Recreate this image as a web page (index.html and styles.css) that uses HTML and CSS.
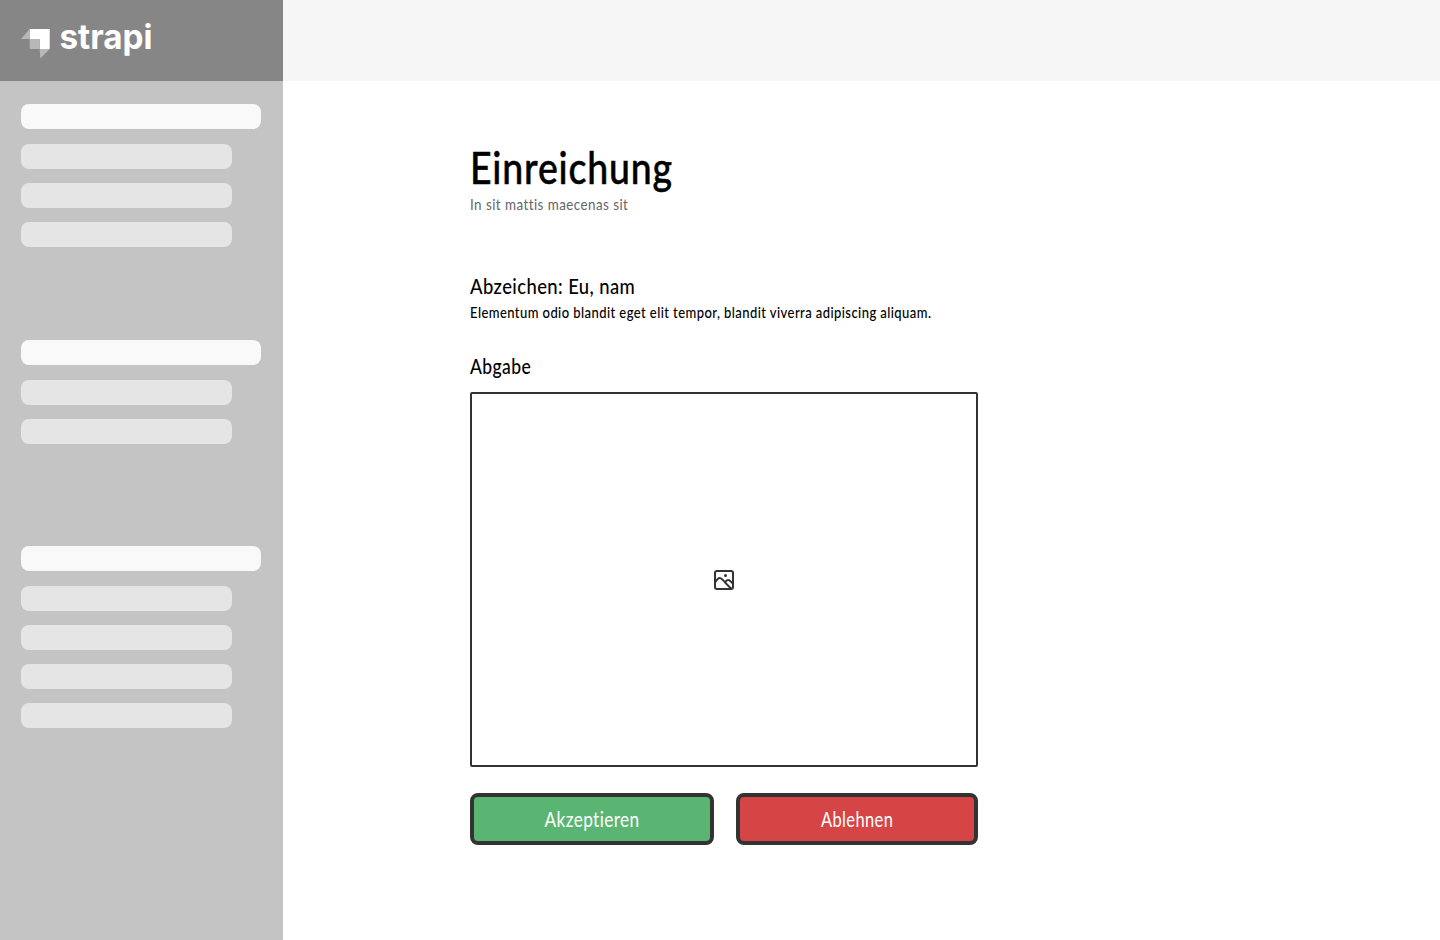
FILE: index.html
```html
<!DOCTYPE html>
<html lang="de">
<head>
<meta charset="utf-8">
<title>Einreichung</title>
<link rel="stylesheet" href="styles.css">
</head>
<body>
<div class="app">
  <aside class="sidebar">
    <div class="brand">
      <svg width="140" height="48" viewBox="16 16 140 48" aria-label="strapi">
        <path fill="#fff" d="M29.7 29h20v20h-10V39h-10z"/>
        <path fill="#b8b8b8" d="M29.7 39h10v10h-10z"/>
        <path fill="#b8b8b8" d="M29.7 29v10H21zM39.7 49h10l-9.4 9.5z"/>
        <text class="brand-name" x="59.5" y="49.3" textLength="93" lengthAdjust="spacingAndGlyphs">strapi</text>
      </svg>
    </div>
    <nav class="menu">
      <div class="group"><i class="bar head"></i><i class="bar"></i><i class="bar"></i><i class="bar"></i></div>
      <div class="group second"><i class="bar head"></i><i class="bar"></i><i class="bar"></i></div>
      <div class="group third"><i class="bar head"></i><i class="bar"></i><i class="bar"></i><i class="bar"></i><i class="bar"></i></div>
    </nav>
  </aside>
  <div class="page">
    <header class="topbar"></header>
    <main class="content">
      <h1 class="title"><span>Einreichung</span></h1>
      <p class="subtitle"><span>In sit mattis maecenas sit</span></p>
      <h2 class="badge-name"><span>Abzeichen: Eu, nam</span></h2>
      <p class="description"><span>Elementum odio blandit eget elit tempor, blandit viverra adipiscing aliquam.</span></p>
      <h2 class="section"><span>Abgabe</span></h2>
      <div class="preview">
        <svg width="20" height="20" viewBox="0 0 20 20" fill="none" stroke="#333" stroke-width="2" stroke-linejoin="round">
          <rect x="1" y="1" width="18" height="18" rx="2"/>
          <path d="M1 12.5C3 9.2 4.8 7.7 6.3 8.1C9 8.8 13 16 18 19M10.8 12.3C12 10.8 13 10 14.2 10.1C16 10.2 17.5 12 19 14"/>
          <circle cx="11.5" cy="5.5" r="1.5" fill="#333" stroke="none"/>
        </svg>
      </div>
      <div class="actions">
        <button class="button accept"><span>Akzeptieren</span></button>
        <button class="button reject"><span>Ablehnen</span></button>
      </div>
    </main>
  </div>
</div>
</body>
</html>
```
FILE: styles.css
```css
* { box-sizing: border-box; }
body { margin: 0; background: #fff; color: #000; font-family: Lato, sans-serif; font-variant-ligatures: none; }
.app { display: flex; height: 940px; overflow: hidden; }
.sidebar { width: 283px; flex: none; background: #c4c4c4; }
.brand { height: 81px; padding: 16px; background: #868686; }
.brand svg { display: block; }
.brand-name { font: 700 34px Inter, sans-serif; fill: #fff; }
.menu { padding: 23px 21px; }
.group { display: flex; flex-direction: column; gap: 14px; }
.second { margin-top: 93px; }
.third { margin-top: 102px; }
.bar { width: 211px; height: 25px; border-radius: 8px; background: #e5e5e5; }
.head { width: 240px; margin-bottom: 1px; background: #f9f9f9; }
.page { flex: 1; }
.topbar { height: 81px; background: #f6f6f6; }
.content { width: 508px; margin-left: 187px; padding-top: 58px; }
h1, h2, p { margin: 0; font-weight: 500; white-space: nowrap; }
.content span { display: inline-block; transform-origin: left center; }
.title { height: 53px; font-size: 45px; line-height: 57px; letter-spacing: 1px; -webkit-text-stroke: .5px #000; }
.title span { transform: scaleX(.832); }
.subtitle { height: 80px; color: #666; font-size: 15px; line-height: 24px; font-weight: 400; letter-spacing: .5px; }
.subtitle span { transform: scaleX(.893); }
.badge-name, .section { height: 28px; font-size: 22px; line-height: 28px; letter-spacing: .5px; }
.badge-name span { transform: scaleX(.837); }
.section span { transform: scaleX(.795); }
.description { height: 52px; font-size: 15.5px; line-height: 24px; letter-spacing: .5px; }
.description span { transform: scaleX(.84); }
.preview { display: flex; align-items: center; justify-content: center; height: 375px; margin-top: 12px; border: 2px solid #333; border-radius: 2px; }
.actions { display: flex; gap: 22px; margin-top: 26px; }
.button { width: 244px; height: 52px; padding: 0; border: 4px solid #333; border-radius: 8px; color: #fff; font: 400 21px/44px Lato, sans-serif; font-variant-ligatures: none; letter-spacing: .5px; }
.button span { transform-origin: center; transform: scaleX(.82); }
.accept { background: #5ab572; }
.reject { width: 242px; background: #d64545; }
.reject span { transform: scaleX(.785); }
```
